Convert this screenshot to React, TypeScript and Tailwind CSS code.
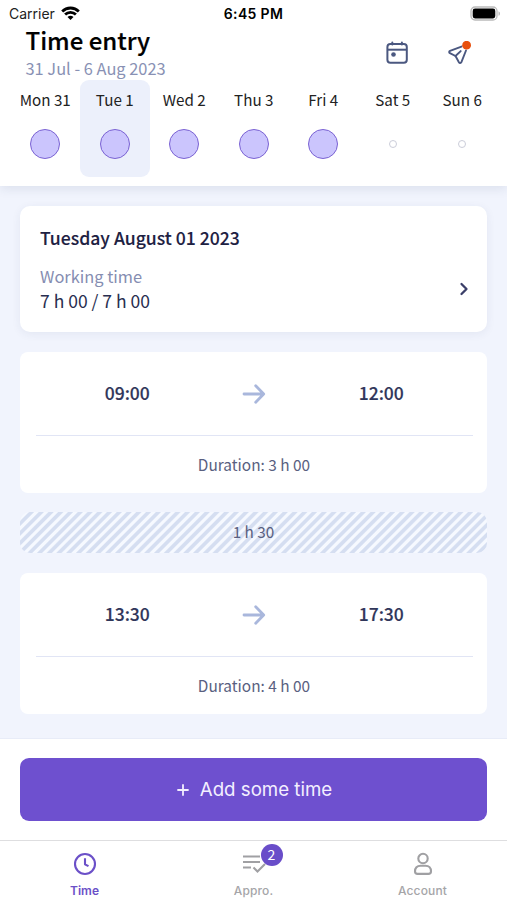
import { Fragment } from 'react';

const days = [
  { label: 'Mon 31', logged: true },
  { label: 'Tue 1', logged: true, selected: true },
  { label: 'Wed 2', logged: true },
  { label: 'Thu 3', logged: true },
  { label: 'Fri 4', logged: true },
  { label: 'Sat 5', logged: false },
  { label: 'Sun 6', logged: false },
];

const entries = [
  { start: '09:00', end: '12:00', duration: '3 h 00', pause: '1 h 30' },
  { start: '13:30', end: '17:30', duration: '4 h 00' },
];

function StatusBar() {
  return (
    <div className="flex h-[26px] items-center justify-between pl-[9px] pr-[6px] font-['Inter',sans-serif] text-[14px] text-[#222]">
      <div className="flex w-[160px] items-center gap-[6px]">
        <span>Carrier</span>
        <svg width="19" height="15" viewBox="0 0 19 15" fill="none" stroke="#000" strokeWidth="2.8">
          <path d="M1.2 5.4a11.8 11.8 0 0 1 16.6 0" />
          <path d="M4.1 8.6a7.7 7.7 0 0 1 10.8 0" />
          <path d="M6.5 11.1a4.3 4.3 0 0 1 6 0l-3 3z" fill="#000" stroke="none" />
        </svg>
      </div>
      <span className="pt-px text-[14px] font-semibold tracking-[0.35px] text-black">6:45 PM</span>
      <div className="flex w-[163px] justify-end">
        <svg width="31" height="15" viewBox="0 0 31 15">
          <rect x="1" y="1" width="26" height="13" rx="4" fill="#fff" stroke="#bbb" strokeWidth="1.3" />
          <rect x="2.7" y="2.6" width="22.6" height="9.8" rx="2.3" fill="#000" />
          <path d="M28.5 5.2c2 .8 2 3.800 0 4.600z" fill="#bbb" />
        </svg>
      </div>
    </div>
  );
}

function CalendarIcon() {
  return (
    <svg width="24" height="24" viewBox="0 0 24 24" fill="none" stroke="#4b5880" strokeWidth="2">
      <rect x="2.400" y="3.100" width="19.400" height="18.600" rx="3" />
      <path d="M2.400 8.700h19.400" />
      <path d="M7.300 1.500v2M16.900 1.500v2" strokeLinecap="round" />
      <circle cx="8.500" cy="13.500" r="2.300" fill="#4b5880" stroke="none" />
    </svg>
  );
}

function SendIcon() {
  return (
    <svg width="26" height="26" viewBox="0 0 26 26" fill="none" stroke="#4b5880" strokeWidth="1.900" strokeLinecap="round" strokeLinejoin="round">
      <path d="M14.500 5.600 3 9.900c-1.100.5-1.100 1.700-.1 2.200l5.600 2.900 3.400 6.200c.7 1.200 2 1.100 2.500-.1l4.600-11.600" />
      <path d="m8.500 15 5.200-4.900" />
      <circle cx="19.600" cy="4.200" r="4.400" fill="#e8500e" stroke="none" />
    </svg>
  );
}

function ArrowIcon() {
  return (
    <svg width="24" height="20" viewBox="0 0 24 20" fill="none" stroke="#a9b7dc" strokeWidth="2.800" strokeLinecap="round" strokeLinejoin="round">
      <path d="M2 10h19.500M13.700 1.800l8 8.200-8 8.200" />
    </svg>
  );
}

function EntryCard({ start, end, duration }: { start: string; end: string; duration: string }) {
  return (
    <section className="h-[141px] rounded-[8px] bg-white pl-4 pr-[14px] text-center">
      <div className="grid h-[84px] grid-cols-[1fr_40px_1fr] items-center border-b border-[#e1e5f5] text-[17.500px] font-medium text-[#30365a] [-webkit-text-stroke:0.150px]">
        <span className="pb-px pr-[16px]">{start}</span>
        <span className="flex justify-center pr-[2px] pt-px"><ArrowIcon /></span>
        <span className="pb-px pl-[15px]">{end}</span>
      </div>
      <p className="pr-[1px] text-[15.400px] leading-[56px] text-[#596080]">Duration: {duration}</p>
    </section>
  );
}

export default function App() {
  return (
    <div className="flex h-[900px] w-[507px] flex-col overflow-hidden bg-[#f1f4fd] font-['Noto_Sans_CJK_SC',sans-serif]">
      <header className="h-[186px] shrink-0 bg-white shadow-[0_3px_10px_rgba(40,60,100,0.1)]">
        <StatusBar />
        <div className="flex h-[54px] justify-between pl-[25.500px] pr-[34px]">
          <div>
            <h1 className="text-[24px] font-medium leading-[28px] text-black [-webkit-text-stroke:0.2px]">Time entry</h1>
            <p className="text-[16.400px] leading-[29px] text-[#8991b4]">31 Jul - 6 Aug 2023</p>
          </div>
          <div className="flex gap-[38px] pt-[15px]">
            <CalendarIcon />
            <SendIcon />
          </div>
        </div>
        <div className="grid grid-cols-7 pl-[10.500px] pr-[10px]">
          {days.map((day) => (
            <div
              key={day.label}
              className={`flex h-[97px] flex-col items-center rounded-[9px] ${day.selected ? 'bg-[#ecf0fb]' : ''}`}
            >
              <span className="whitespace-nowrap text-[15.200px] leading-[39px] text-[#222]">{day.label}</span>
              <span className="flex h-[49px] items-center">
                <span
                  className={day.logged ? 'size-[30px] rounded-full border-[1.5px] border-[#7a62d3] bg-[#cbc5fd]' : 'size-[8px] rounded-full border-[1.5px] border-[#cbcdd9]'}
                />
              </span>
            </div>
          ))}
        </div>
      </header>

      <main className="flex flex-1 flex-col gap-[19.500px] px-5 pt-5">
        <section className="flex h-[126.400px] items-start justify-between rounded-[10px] bg-white pl-5 pr-[17px] pt-[18px] shadow-[0_2px_10px_rgba(40,60,100,0.07)]">
          <div>
            <h2 className="text-[17.600px] font-medium leading-[28px] text-[#1d2142] [-webkit-text-stroke:0.1px]">Tuesday August 01 2023</h2>
            <p className="mt-[12px] text-[16.400px] leading-[24px] text-[#858db1]">Working time</p>
            <p className="text-[17.500px] leading-[25px] text-[#292e50]">7 h 00 / 7 h 00</p>
          </div>
          <svg className="mt-[58px]" width="12" height="14" viewBox="0 0 12 14" fill="none" stroke="#3b3f69" strokeWidth="2.300" strokeLinecap="round" strokeLinejoin="round">
            <path d="m3.500 2 5 5-5 5" />
          </svg>
        </section>
        {entries.map((entry) => (
          <Fragment key={entry.start}>
            <EntryCard start={entry.start} end={entry.end} duration={entry.duration} />
            {entry.pause && (
              <div className="h-[41px] rounded-[10px] bg-[repeating-linear-gradient(135deg,#d5def1_0px,#d5def1_2.600px,#f6f9ff_3.700px,#f6f9ff_5.800px,#d5def1_6.900px)] text-center text-[15.300px] leading-[39px] text-[#596080]">
                {entry.pause}
              </div>
            )}
          </Fragment>
        ))}
      </main>

      <div className="h-[102px] shrink-0 border-t border-[#e8ecf8] bg-white px-5 pt-[19px]">
        <button className="flex h-[63px] w-full items-center justify-center gap-[11px] rounded-[9px] bg-[#6e50cf] pl-[2px] pt-px font-['Inter',sans-serif] text-[18.700px] text-[#f3efff]">
          <svg width="12" height="12" viewBox="0 0 12 12" stroke="currentColor" strokeWidth="1.800" strokeLinecap="round">
            <path d="M1 6h10M6 1v10" />
          </svg>
          <span>Add some time</span>
        </button>
      </div>

      <nav className="grid h-[60px] shrink-0 grid-cols-3 border-t border-[#dedee0] bg-white font-['Inter',sans-serif] text-[12px] font-medium text-[#a5a5a8]">
        <div className="flex flex-col items-center gap-[6px] pt-[11px] text-[#6b50c8]">
          <svg width="24" height="24" viewBox="0 0 24 24" fill="none" stroke="currentColor" strokeWidth="2.100" strokeLinejoin="round">
            <circle cx="12" cy="12" r="10" />
            <path d="M12 6.200V12.300l3.500 1.900" />
          </svg>
          <span className="font-semibold leading-[18px]">Time</span>
        </div>
        <div className="flex flex-col items-center gap-[6px] pt-[11px]">
          <span className="relative h-[24px] w-[24px]">
            <svg width="24" height="24" viewBox="0 0 24 24" fill="none" stroke="#a0a0a3" strokeWidth="2.100">
              <path d="M1 4.500h17M1 10h17M1 15.500h8M11.500 15.500l4 4 7.500-7.500" />
            </svg>
            <span className="absolute left-[19px] top-[-8px] size-[22px] rounded-full bg-[#694dc9] text-center font-['Noto_Sans_CJK_SC',sans-serif] text-[14px] font-normal leading-[20px] text-white">2</span>
          </span>
          <span className="tracking-[0.150px] leading-[18px]">Appro.</span>
        </div>
        <div className="flex flex-col items-center gap-[6px] pt-[11px]">
          <svg width="24" height="24" viewBox="0 0 24 24" fill="none" stroke="#a0a0a3" strokeWidth="2.100">
            <circle cx="12" cy="6.500" r="4.700" />
            <path d="M9.500 13.700h5c3.500 0 5.500 2.500 5.500 5.500 0 1.800-.8 2.700-2.600 2.700H6.600C4.800 21.900 4 21 4 19.200c0-3 2-5.500 5.500-5.500Z" />
          </svg>
          <span className="tracking-[0.150px] leading-[18px]">Account</span>
        </div>
      </nav>
    </div>
  );
}
